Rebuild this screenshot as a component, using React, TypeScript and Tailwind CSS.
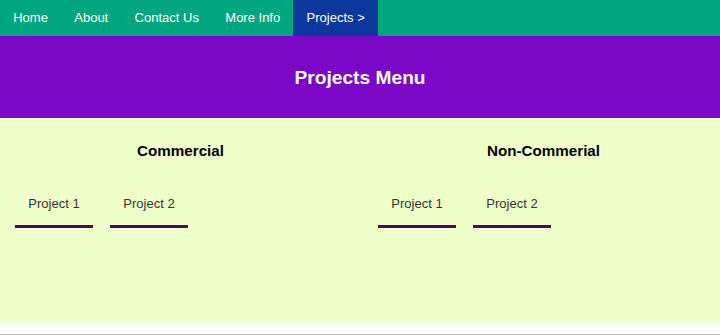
import React from "react";

const navItems = ["Home", "About", "Contact Us", "More Info", "Projects >"];

function Column({ title, headPad }: { title: string; headPad: string }) {
  return (
    <div className="flex flex-col">
      <h2 className={`mt-[24px] text-center text-[15.2px] font-bold leading-[18px] text-black ${headPad}`}>{title}</h2>
      <div className="mt-[22px] flex gap-[17px] px-[15px]">
        {["Project 1", "Project 2"].map((p) => (
          <div
            key={p}
            className="w-[78px] border-b-[3px] border-[#4a0a60] pt-[14px] pb-[14px] text-center text-[13px] leading-[15px] text-[#333333]"
          >
            {p}
          </div>
        ))}
      </div>
    </div>
  );
}

export default function App() {
  return (
    <div className="flex h-[335px] w-[720px] flex-col bg-white" style={{ fontFamily: '"Liberation Sans", Arial, sans-serif' }}>
      <nav className="flex h-9 bg-[#00a67e]">
        {navItems.map((n, i) => (
          <div
            key={n}
            className={`flex h-9 items-center px-[13.2px] text-[13px] text-white ${i === 4 ? "bg-[#0a389c]" : ""}`}
          >
            {n}
          </div>
        ))}
      </nav>
      <header className="flex h-[82px] items-center justify-center bg-[#7a08c6]">
        <h1 className="mt-[2px] text-[19.2px] font-bold text-white">Projects Menu</h1>
      </header>
      <main className="grid h-[205px] grid-cols-[363px_1fr] bg-[#efffca]">
        <Column title="Commercial" headPad="pr-[2px]" />
        <Column title="Non-Commerial" headPad="pl-[4px]" />
      </main>
      <div className="h-[11px]" />
      <div className="h-px bg-[#bbbbbb]" />
    </div>
  );
}
